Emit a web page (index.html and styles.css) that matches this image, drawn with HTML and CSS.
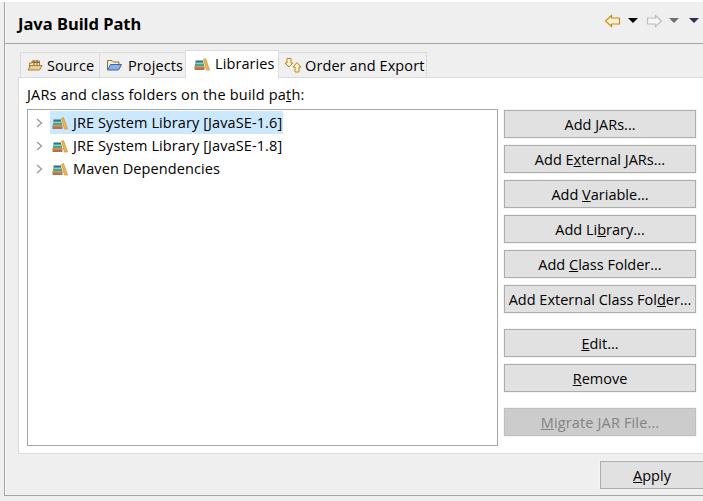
FILE: index.html
```html
<!DOCTYPE html>
<html lang="en">
<head>
<meta charset="utf-8">
<title>Java Build Path</title>
<link rel="stylesheet" href="styles.css">
</head>
<body>
<svg class="defs" width="0" height="0">
  <symbol id="books" viewBox="0 0 16 16">
    <rect x="1.5" y="4.5" width="7.5" height="2.2" fill="#2c6f8e"/>
    <rect x="1" y="6.7" width="9" height="3.3" fill="#4aa88a"/>
    <rect x="1" y="7" width="9" height="1" fill="#8fd0b0"/>
    <rect x="0.5" y="10" width="10" height="4" fill="#b4724a"/>
    <rect x="0.5" y="10.4" width="10" height="1" fill="#dba77e"/>
    <path d="M9.5 3.5 L11.5 2.5 L15.5 14 H12.5 Z" fill="#f0b84c" stroke="#cf8f2a" stroke-width="0.7"/>
  </symbol>
</svg>
<div class="page">
  <main class="window">
    <header class="header">
      <h1 class="title">Java Build Path</h1>
      <div class="nav">
        <svg class="nav-arrow" width="18" height="14" viewBox="0 0 18 14"><path d="M7.5 1.5 L1.5 7 L7.5 12.5 V10 H15.5 V4 H7.5 Z" fill="#fff3cf" stroke="#c98a1e" stroke-width="1.2"/></svg>
        <svg class="nav-drop" width="10" height="5" viewBox="0 0 10 5"><path d="M0 0H10L5 5Z" fill="#000"/></svg>
        <svg class="nav-arrow second" width="18" height="14" viewBox="0 0 18 14"><path d="M10.5 1.5 L16.5 7 L10.5 12.5 V10 H2.5 V4 H10.5 Z" fill="#f6f6f6" stroke="#bdbdbd" stroke-width="1.2"/></svg>
        <svg class="nav-drop" width="10" height="5" viewBox="0 0 10 5"><path d="M0 0H10L5 5Z" fill="#707070"/></svg>
        <svg class="nav-drop last" width="10" height="5" viewBox="0 0 10 5"><path d="M0 0H10L5 5Z" fill="#3a2a5a"/></svg>
      </div>
    </header>
    <div class="tabs">
      <div class="tab tab-source">
        <svg class="icon" width="16" height="16" viewBox="0 0 16 16"><path d="M2.5 11 V6 H5 V4 H12.5 V9" fill="#f5e3bd" stroke="#a87d3c"/><path d="M7 3 V8 M10 3 V8 M5 5.5 H12.5" stroke="#8a6530" fill="none"/><path d="M1 13 L3.5 8.5 H15 L12.5 13 Z" fill="#eccd93" stroke="#a87d3c"/></svg>
        <span>Source</span>
      </div>
      <div class="tab tab-projects">
        <svg class="icon" width="16" height="16" viewBox="0 0 16 16"><path d="M1.5 13 V3.5 H6 L7.5 5 H13 V8" fill="#fbeeb8" stroke="#7e7458"/><path d="M1.5 13 L4.5 7.5 H15.5 L12.5 13 Z" fill="#86b2e6" stroke="#3f63a8"/></svg>
        <span>Projects</span>
      </div>
      <div class="tab tab-libraries">
        <svg class="icon" width="16" height="16"><use href="#books"/></svg>
        <span>Libraries</span>
      </div>
      <div class="tab tab-order">
        <svg class="icon" width="18" height="16" viewBox="0 0 18 16"><path d="M3 1.5 H7 V6 H9 L5 10 L1 6 H3 Z" fill="#fff3c8" stroke="#b98a2a"/><path d="M13 5.5 L17 10 H15 V15 H11 V10 H9 Z" fill="#fff3c8" stroke="#b98a2a"/></svg>
        <span>Order and Export</span>
      </div>
    </div>
    <section class="panel">
      <p class="panel-label">JARs and class folders on the build pa<u>t</u>h:</p>
      <div class="panel-body">
        <div class="tree">
          <div class="tree-row">
            <svg class="chev" width="7" height="10" viewBox="0 0 7 10"><path d="M1 1 L5.5 5 L1 9" fill="none" stroke="#9a9a9a" stroke-width="1.3"/></svg>
            <div class="tree-item selected">
              <svg class="icon" width="16" height="16"><use href="#books"/></svg>
              <span>JRE System Library [JavaSE-1.6]</span>
            </div>
          </div>
          <div class="tree-row">
            <svg class="chev" width="7" height="10" viewBox="0 0 7 10"><path d="M1 1 L5.5 5 L1 9" fill="none" stroke="#9a9a9a" stroke-width="1.3"/></svg>
            <div class="tree-item">
              <svg class="icon" width="16" height="16"><use href="#books"/></svg>
              <span>JRE System Library [JavaSE-1.8]</span>
            </div>
          </div>
          <div class="tree-row">
            <svg class="chev" width="7" height="10" viewBox="0 0 7 10"><path d="M1 1 L5.5 5 L1 9" fill="none" stroke="#9a9a9a" stroke-width="1.3"/></svg>
            <div class="tree-item">
              <svg class="icon" width="16" height="16"><use href="#books"/></svg>
              <span>Maven Dependencies</span>
            </div>
          </div>
        </div>
        <div class="buttons">
          <button class="btn">Add <u>J</u>ARs...</button>
          <button class="btn">Add E<u>x</u>ternal JARs...</button>
          <button class="btn">Add <u>V</u>ariable...</button>
          <button class="btn">Add Li<u>b</u>rary...</button>
          <button class="btn">Add <u>C</u>lass Folder...</button>
          <button class="btn">Add External Class Fol<u>d</u>er...</button>
          <button class="btn group-start"><u>E</u>dit...</button>
          <button class="btn"><u>R</u>emove</button>
          <button class="btn disabled group-end"><u>M</u>igrate JAR File...</button>
        </div>
      </div>
    </section>
    <footer class="footer">
      <button class="btn apply"><u>A</u>pply</button>
    </footer>
  </main>
</div>
</body>
</html>
```
FILE: styles.css
```css
* { box-sizing: border-box; }
html, body { margin: 0; height: 100%; overflow: hidden; }
body { background: #efefef; font-family: "Open Sans", "Noto Sans", sans-serif; font-size: 14.5px; color: #000; }
.defs { position: absolute; }
.page { height: 501px; border-top: 2px solid #fff; padding-left: 4px; }
.window { height: 494px; width: 699px; border-left: 1px solid #a6a6a6; border-bottom: 1px solid #a6a6a6; box-shadow: inset 1px 0 0 #f8f8f8; display: flex; flex-direction: column; overflow: hidden; }
.header { height: 42px; flex: none; border-bottom: 1px solid #a6a6a6; display: flex; align-items: center; justify-content: space-between; padding-left: 13px; padding-right: 4px; }
.title { margin: 2px 0 0; font-size: 16.5px; font-weight: 700; font-family: "Noto Sans", sans-serif; }
.nav { display: flex; align-items: center; margin-top: -4px; }
.nav-arrow { margin-right: 6px; }
.nav-arrow.second { margin-left: 7px; }
.nav-drop.last { margin-left: 10px; }
.tabs { flex: none; display: flex; align-items: flex-end; height: 33px; padding-left: 15px; letter-spacing: 0.1px; }
.tab { height: 25px; display: flex; align-items: center; background: #f0f0f0; border: 1px solid #dcdcdc; border-bottom: none; margin-right: -1px; white-space: nowrap; }
.tab-source { width: 80px; padding-left: 6px; gap: 4px; }
.tab-projects { width: 87px; padding-left: 6px; gap: 6px; }
.tab-libraries { width: 94px; padding-left: 8px; gap: 5px; height: 28px; background: #fff; padding-bottom: 2px; position: relative; z-index: 1; margin-bottom: -1px; }
.tab-order { width: 149px; padding-left: 5px; gap: 3px; }
.icon { flex: none; }
.panel { flex: none; height: 377px; margin-left: 13px; background: #fff; border-top: 1px solid #dcdcdc; border-bottom: 1px solid #dcdcdc; border-left: 1px solid #dcdcdc; padding: 0 0 0 8px; }
.panel-label { margin: 0; height: 31px; padding-top: 2px; line-height: 29px; letter-spacing: 0.2px; }
.panel-body { display: flex; gap: 6px; }
.tree { width: 471px; height: 337px; border: 1px solid #a6a6a6; padding: 1px 0 0 8px; letter-spacing: 0.1px; }
.tree-row { height: 23px; display: flex; align-items: center; gap: 7px; }
.tree-item { display: flex; align-items: center; gap: 5px; height: 23px; padding: 0 1px 0 2px; }
.tree-item.selected { background: #cce8ff; }
.buttons { width: 192px; display: flex; flex-direction: column; gap: 7px; padding-top: 1px; }
.btn { width: 192px; height: 28px; flex: none; padding: 0; background: #e1e1e1; border: 1px solid #adadad; font: inherit; color: #000; box-shadow: 0 0 0 1px #f4f4f4; white-space: nowrap; }
.btn.group-start { margin-top: 9px; }
.btn.group-end { margin-top: 9px; }
.btn.disabled { background: #cccccc; color: #838383; border-color: #bfbfbf; letter-spacing: 0.15px; }
.footer { flex: 1; display: flex; padding: 7px 0 0 595px; }
.btn.apply { width: 104px; }
```
